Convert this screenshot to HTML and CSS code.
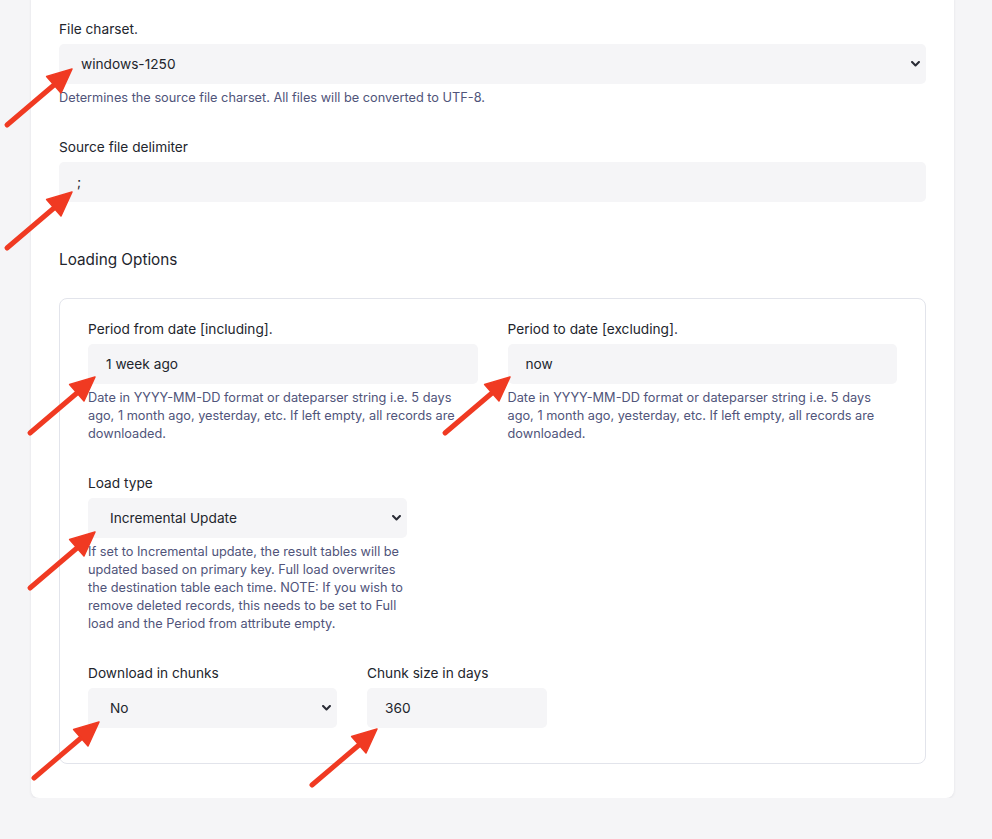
FILE: index.html
```html
<!DOCTYPE html>
<html lang="en">
<head>
    <meta charset="UTF-8">
    <meta name="viewport" content="width=device-width, initial-scale=1.0">
    <title>Source Settings</title>
    <link rel="stylesheet" href="styles.css">
</head>
<body>

    <div class="page">
        <div class="card">
            <div class="group">
                <label class="field-label">File charset.</label>
                <div class="select-wrap">
                    <select class="control select"><option>windows-1250</option></select>
                    <svg class="chevron" viewBox="0 0 10 7"><path d="M1 1.2 L5 5.2 L9 1.2"/></svg>
                </div>
                <p class="help">Determines the source file charset. All files will be converted to UTF-8.</p>
            </div>

            <div class="group">
                <label class="field-label">Source file delimiter</label>
                <input class="control" type="text" value=";">
            </div>

            <h3 class="section-title">Loading Options</h3>

            <div class="options-box">
                <div class="group two-col">
                    <div class="field">
                        <label class="field-label">Period from date [including].</label>
                        <input class="control" type="text" value="1 week ago">
                        <p class="help">Date in YYYY-MM-DD format or dateparser string i.e. 5 days ago, 1 month ago, yesterday, etc. If left empty, all records are downloaded.</p>
                    </div>
                    <div class="field">
                        <label class="field-label">Period to date [excluding].</label>
                        <input class="control" type="text" value="now">
                        <p class="help">Date in YYYY-MM-DD format or dateparser string i.e. 5 days ago, 1 month ago, yesterday, etc. If left empty, all records are downloaded.</p>
                    </div>
                </div>

                <div class="group load-type">
                    <label class="field-label">Load type</label>
                    <div class="select-wrap">
                        <select class="control select"><option>Incremental Update</option><option>Full Load</option></select>
                        <svg class="chevron" viewBox="0 0 10 7"><path d="M1 1.2 L5 5.2 L9 1.2"/></svg>
                    </div>
                    <p class="help">If set to Incremental update, the result tables will be updated based on primary key. Full load overwrites the destination table each time. NOTE: If you wish to remove deleted records, this needs to be set to Full load and the Period from attribute empty.</p>
                </div>

                <div class="group chunks">
                    <div class="chunk-toggle">
                        <label class="field-label">Download in chunks</label>
                        <div class="select-wrap">
                            <select class="control select"><option>No</option><option>Yes</option></select>
                            <svg class="chevron" viewBox="0 0 10 7"><path d="M1 1.2 L5 5.2 L9 1.2"/></svg>
                        </div>
                    </div>
                    <div class="chunk-size">
                        <label class="field-label">Chunk size in days</label>
                        <input class="control" type="text" value="360">
                    </div>
                </div>
            </div>
        </div>
    </div>

    <!-- annotation arrows -->
    <svg class="arrow a1" viewBox="0 0 72 64"><line x1="4" y1="60" x2="51" y2="20"/><polygon points="69,4 43.6,11.4 58,28"/></svg>
    <svg class="arrow a2" viewBox="0 0 72 64"><line x1="4" y1="60" x2="51" y2="20"/><polygon points="69,4 43.6,11.4 58,28"/></svg>
    <svg class="arrow a3" viewBox="0 0 72 64"><line x1="4" y1="60" x2="51" y2="20"/><polygon points="69,4 43.6,11.4 58,28"/></svg>
    <svg class="arrow a4" viewBox="0 0 72 64"><line x1="4" y1="60" x2="51" y2="20"/><polygon points="69,4 43.6,11.4 58,28"/></svg>
    <svg class="arrow a5" viewBox="0 0 72 64"><line x1="4" y1="60" x2="51" y2="20"/><polygon points="69,4 43.6,11.4 58,28"/></svg>
    <svg class="arrow a6" viewBox="0 0 72 64"><line x1="4" y1="60" x2="51" y2="20"/><polygon points="69,4 43.6,11.4 58,28"/></svg>
    <svg class="arrow a7" viewBox="0 0 72 64"><line x1="4" y1="60" x2="51" y2="20"/><polygon points="69,4 43.6,11.4 58,28"/></svg>

</body>
</html>
```

FILE: styles.css
```css
:root {
    --bg-color: #f5f5f7;
    --input-bg: #f5f5f7;
    --text: #22252d;
    --help: #50547a;
    --border: #e2e4eb;
    --arrow: #f03a22;
}
body {
    margin: 0;
    font-family: Inter, "Noto Sans", sans-serif;
    background-color: var(--bg-color);
    color: var(--text);
    overflow: hidden;
}
.page {
    padding: 0 38px 0 31px;
}
.card {
    margin-top: -9px;
    background-color: white;
    border-radius: 8px;
    padding: 28px 28px 34px;
    box-shadow: 0 1px 3px rgba(20, 25, 50, 0.08);
}
.group + .group {
    margin-top: 30px;
}
.field-label {
    display: block;
    font-size: 13.7px;
    line-height: 20px;
    margin-bottom: 5px;
}
.control {
    display: block;
    box-sizing: border-box;
    width: 100%;
    height: 40px;
    margin: 0;
    border: none;
    border-radius: 5px;
    background-color: var(--input-bg);
    font-family: inherit;
    font-size: 13.7px;
    color: var(--text);
    padding: 0 18px;
    outline: none;
}
.select {
    -webkit-appearance: none;
    appearance: none;
    padding: 0 30px 0 22px;
}
.select-wrap {
    position: relative;
}
.chevron {
    position: absolute;
    right: 6px;
    top: 17px;
    width: 9px;
    height: 6px;
    fill: none;
    stroke: #2a2c36;
    stroke-width: 2.4;
    stroke-linecap: round;
    stroke-linejoin: round;
    pointer-events: none;
}
.help {
    margin: 5px 0 0;
    font-size: 12.75px;
    line-height: 18px;
    color: var(--help);
}
.section-title {
    margin: 46px 0 26px;
    font-size: 15.3px;
    line-height: 24px;
    font-weight: 400;
}
.options-box {
    border: 1px solid var(--border);
    border-radius: 8px;
    padding: 20px 28px 35px;
}
.two-col {
    display: grid;
    grid-template-columns: 1fr 1fr;
    column-gap: 30px;
}
.load-type {
    width: 319px;
}
.chunks {
    display: flex;
    gap: 30px;
}
.chunk-toggle {
    width: 249px;
}
.chunk-size {
    width: 180px;
}

/* red annotation arrows */
.arrow {
    position: absolute;
    width: 72px;
    height: 64px;
    overflow: visible;
}
.arrow line {
    stroke: var(--arrow);
    stroke-width: 5;
    stroke-linecap: round;
}
.arrow polygon {
    fill: var(--arrow);
    stroke: var(--arrow);
    stroke-width: 1.5;
    stroke-linejoin: round;
}
.a1 { left: 3px; top: 65px; }
.a2 { left: 3px; top: 188px; }
.a3 { left: 26px; top: 373px; }
.a4 { left: 441px; top: 373px; }
.a5 { left: 26px; top: 528px; }
.a6 { left: 30px; top: 718px; }
.a7 { left: 308px; top: 725px; }
```
